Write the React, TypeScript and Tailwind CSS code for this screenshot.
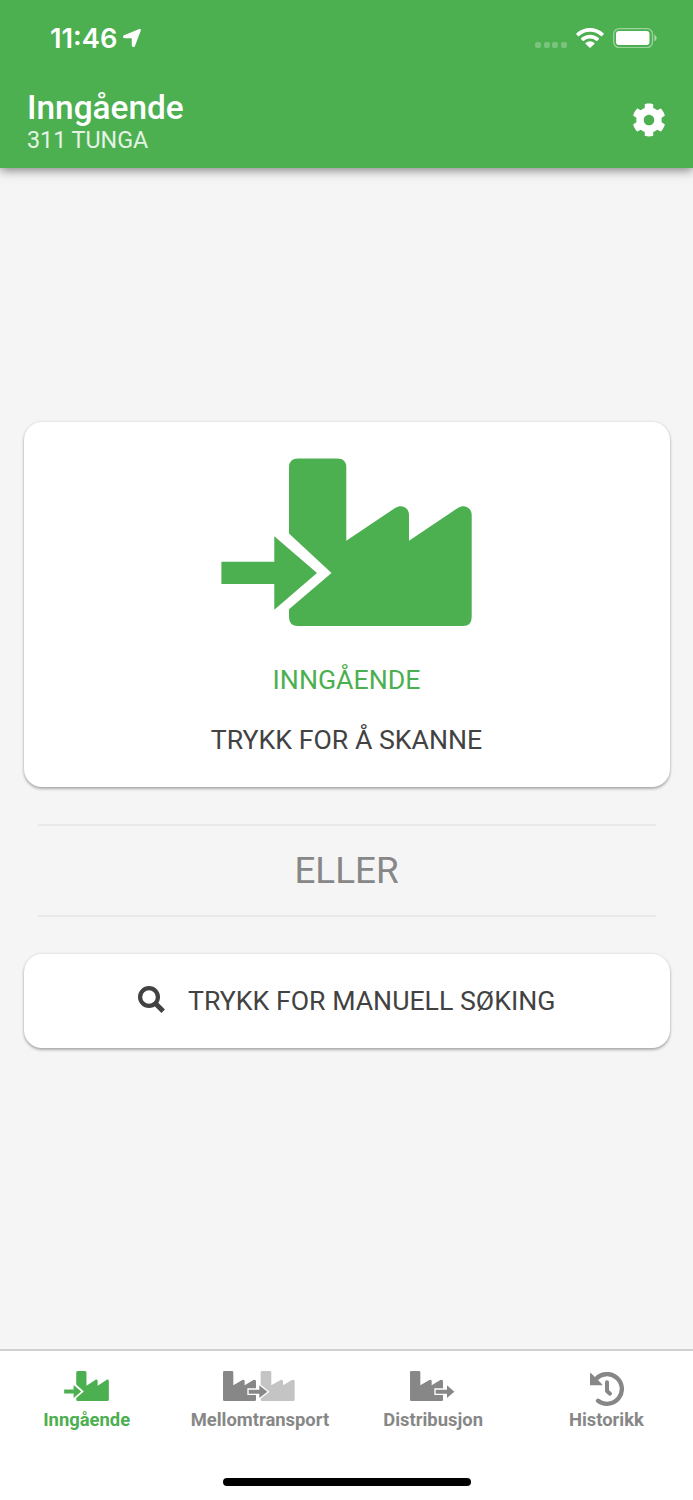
import type { ReactNode } from "react";
import { FaCog } from "react-icons/fa";

const SMALL_FACTORY =
  "M4 0H27Q31 0 31 4V43L58 27Q65 24 65 31V43L91 27Q99 24 99 31V86Q99 90 95 90H4Q0 90 0 86V4Q0 0 4 0Z";

function IncomingIcon({ className }: { className: string }) {
  return (
    <svg viewBox="0 0 251 168" className={className} fill="currentColor" aria-hidden="true">
      <path d="M.4 103.7H53.3V78.3L96 115L53.3 151.7V126H.4Z" />
      <path d="M77 .6H116.500Q125.300 .6 125.300 9.500V82.700L174.500 49.700C180.500 45.800 188 49.500 188 57V82.700L237.200 49.700C243 45.800 250.700 49.500 250.700 57V159Q250.700 168 242 168H77Q68 168 68 159V151.300L110.500 115L68 75.500V9.500Q68 .6 77 .6Z" />
    </svg>
  );
}

function TransferIcon() {
  return (
    <svg viewBox="0 0 216 90" className="mr-px h-[30px] w-[72px]" fill="currentColor" aria-hidden="true">
      <path d={SMALL_FACTORY} />
      <path d={SMALL_FACTORY} transform="translate(113 0) scale(1.03 1)" className="text-[#c4c4c4]" />
      <path
        d="M77 56H109V43L133 62L109 81V68H77Z"
        stroke="white"
        strokeWidth="8"
        paintOrder="stroke"
      />
    </svg>
  );
}

function OutgoingIcon() {
  return (
    <svg viewBox="0 0 135 90" className="mr-px h-[30px] w-[45px]" fill="currentColor" aria-hidden="true">
      <path d={SMALL_FACTORY} />
      <path
        d="M77 56H111V43L133 62L111 81V68H77Z"
        stroke="white"
        strokeWidth="8"
        paintOrder="stroke"
      />
    </svg>
  );
}

function SearchIcon() {
  return (
    <svg viewBox="0 0 27 27" className="size-[27px]" aria-hidden="true">
      <circle cx="11" cy="11" r="8.900" fill="none" stroke="currentColor" strokeWidth="4.200" />
      <path d="M17.200 17.200L25.200 25.200" stroke="currentColor" strokeWidth="5" />
    </svg>
  );
}

function HistoryIcon() {
  return (
    <svg viewBox="0 0 102 102" className="ml-[2px] mt-px size-[34px]" fill="none" stroke="currentColor" aria-hidden="true">
      <path d="M17 22.300A44.500 44.500 0 1 1 24 86.300" strokeWidth="13" strokeLinecap="round" />
      <path d="M2 5L35 38H2Z" fill="currentColor" strokeWidth="4" strokeLinejoin="round" />
      <path d="M51 31V57L60 65" strokeWidth="12" strokeLinecap="round" strokeLinejoin="round" />
    </svg>
  );
}

function StatusBar() {
  return (
    <div className="flex h-[76px] items-center justify-between pl-[50px] pr-[36.500px]">
      <div className="flex items-center gap-[6px]">
        <span className="mt-[2px] font-['Inter'] text-[27.300px] font-semibold leading-none">11:46</span>
        <svg viewBox="0 0 18 18" className="size-[18px]" fill="currentColor" aria-hidden="true">
          <path d="M16.300 .1Q18.300-.4 17.800 1.600L12 16.900Q11.400 18.300 10 18Q8.800 17.800 8.800 16.500V9.800Q8.800 9.300 8.300 9.300H1.500Q.2 9.300 0 8Q-.1 6.900 1.100 6.300Z" />
        </svg>
      </div>
      <div className="flex items-center">
        <div className="mr-[9px] mt-[14px] flex gap-[2.500px] opacity-25">
          {[0, 1, 2, 3].map((dot) => (
            <span key={dot} className="size-[6px] rounded-[2px] bg-white" />
          ))}
        </div>
        <svg viewBox="0 0 28 20" className="mr-[9px] h-5 w-7" fill="currentColor" aria-hidden="true">
          <path d="M14 0C8.800 0 4 2 .5 5.300Q0 5.900.5 6.500L2 8Q2.500 8.500 3.100 8A15.800 15.800 0 0 1 24.900 8Q25.500 8.500 26 8L27.500 6.500Q28 5.900 27.500 5.300C24 2 19.200 0 14 0Z" />
          <path d="M14 6.700C10.700 6.700 7.600 8 5.200 10.100Q4.700 10.700 5.200 11.200L6.900 12.900Q7.400 13.300 8 12.800A9 9 0 0 1 20 12.800Q20.600 13.300 21.100 12.900L22.800 11.200Q23.300 10.700 22.800 10.100C20.400 8 17.300 6.700 14 6.700Z" />
          <path d="M14 13.200Q11.500 13.200 9.700 14.800Q9.200 15.400 9.700 15.900L13.400 19.600Q14 20.200 14.600 19.600L18.300 15.900Q18.800 15.400 18.300 14.800Q16.500 13.200 14 13.200Z" />
        </svg>
        <svg viewBox="0 0 44 20" className="h-5 w-11" fill="currentColor" aria-hidden="true">
          <rect x=".7" y=".7" width="38.800" height="18.900" rx="5.500" fill="none" stroke="white" strokeOpacity=".45" strokeWidth="1.300" />
          <rect x="3" y="3" width="33.500" height="14" rx="3" />
          <path d="M41.300 6.500Q43.700 7.500 43.700 10T41.300 13.500Z" opacity=".5" />
        </svg>
      </div>
    </div>
  );
}

function Tab({ label, active, children }: { label: string; active?: boolean; children: ReactNode }) {
  return (
    <button
      className={`flex flex-col items-center pt-5 ${active ? "text-[#4caf50]" : "text-[#878787]"}`}
    >
      <span className="flex h-[35px] items-start">{children}</span>
      <span className="mt-[3px] text-[18.400px] font-bold leading-[22px]">{label}</span>
    </button>
  );
}

const cardClass =
  "w-full rounded-[18px] bg-white text-[26.700px] text-[#424242] shadow-[0_2px_3px_rgba(0,0,0,0.28),0_0_3px_rgba(0,0,0,0.12)]";

export default function App() {
  return (
    <div className="flex h-[1500px] w-[693px] flex-col bg-[#f5f5f5] font-['Roboto',sans-serif]">
      <header className="h-[167.500px] shrink-0 bg-[#4caf50] text-white shadow-[0_2px_10px_rgba(0,0,0,0.500)]">
        <StatusBar />
        <div className="flex items-start justify-between pl-[27px] pr-[27px]">
          <div className="pt-[13px]">
            <h1 className="text-[33.400px] font-medium leading-[38px]">Inngående</h1>
            <p className="text-[23.300px] leading-[26px] text-white/85">311 TUNGA</p>
          </div>
          <button aria-label="Innstillinger" className="mt-[27px]">
            <FaCog className="size-[34px]" />
          </button>
        </div>
      </header>

      <main className="flex flex-1 flex-col px-[23.500px] pt-[254px]">
        <button className={`${cardClass} flex h-[365px] shrink-0 flex-col items-center pt-[36.400px]`}>
          <IncomingIcon className="h-[168px] w-[251px] text-[#4caf50]" />
          <span className="mt-[38.200px] leading-8 text-[#4caf50]">INNGÅENDE</span>
          <span className="mt-[28px] leading-8">TRYKK FOR Å SKANNE</span>
        </button>

        <div className="mx-[14px] my-[37px] flex h-[93px] shrink-0 items-center justify-center border-y-2 border-[#e9e9e9] pt-px text-[36.800px] text-[#878787]">
          ELLER
        </div>

        <button className={`${cardClass} flex h-[94px] shrink-0 items-center justify-center gap-[23.500px]`}>
          <span className="-mt-[3px]">
            <SearchIcon />
          </span>
          <span className="mt-px">TRYKK FOR MANUELL SØKING</span>
        </button>
      </main>

      <footer className="flex h-[151px] shrink-0 flex-col items-center border-t-2 border-[#d0d0d0] bg-white">
        <nav className="grid w-full grid-cols-4">
          <Tab label="Inngående" active>
            <IncomingIcon className="h-[30px] w-[45px]" />
          </Tab>
          <Tab label="Mellomtransport">
            <TransferIcon />
          </Tab>
          <Tab label="Distribusjon">
            <OutgoingIcon />
          </Tab>
          <Tab label="Historikk">
            <HistoryIcon />
          </Tab>
        </nav>
        <div className="mb-[14px] mt-auto h-2 w-[248px] rounded-full bg-black" />
      </footer>
    </div>
  );
}
